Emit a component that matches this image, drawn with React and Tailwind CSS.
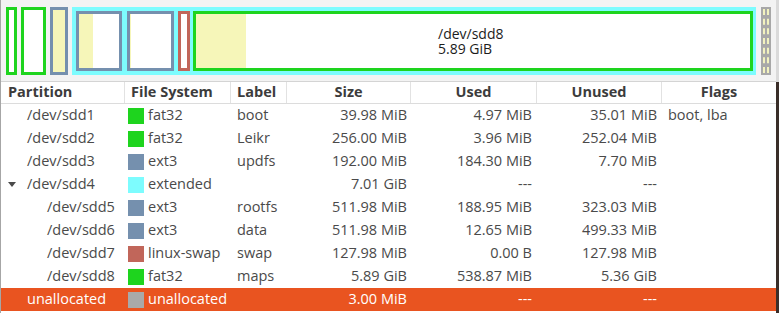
import React from "react";

const FS = {
  fat32: "#1ed41e",
  ext3: "#7590ae",
  "linux-swap": "#c1665a",
  extended: "#7dfcfe",
  unallocated: "#a9a9a9",
};

const ROWS = [
  { part: "/dev/sdd1", depth: 0, fs: "fat32", label: "boot", size: "39.98 MiB", used: "4.97 MiB", unused: "35.01 MiB", flags: "boot, lba" },
  { part: "/dev/sdd2", depth: 0, fs: "fat32", label: "Leikr", size: "256.00 MiB", used: "3.96 MiB", unused: "252.04 MiB" },
  { part: "/dev/sdd3", depth: 0, fs: "ext3", label: "updfs", size: "192.00 MiB", used: "184.30 MiB", unused: "7.70 MiB" },
  { part: "/dev/sdd4", depth: 0, fs: "extended", label: "", size: "7.01 GiB", used: "---", unused: "---", open: true },
  { part: "/dev/sdd5", depth: 1, fs: "ext3", label: "rootfs", size: "511.98 MiB", used: "188.95 MiB", unused: "323.03 MiB" },
  { part: "/dev/sdd6", depth: 1, fs: "ext3", label: "data", size: "511.98 MiB", used: "12.65 MiB", unused: "499.33 MiB" },
  { part: "/dev/sdd7", depth: 1, fs: "linux-swap", label: "swap", size: "127.98 MiB", used: "0.00 B", unused: "127.98 MiB" },
  { part: "/dev/sdd8", depth: 1, fs: "fat32", label: "maps", size: "5.89 GiB", used: "538.87 MiB", unused: "5.36 GiB" },
  { part: "unallocated", depth: 0, fs: "unallocated", label: "", size: "3.00 MiB", used: "---", unused: "---", selected: true },
];

function PartBox({ color, width, fill = 0, children }) {
  return (
    <div
      className="relative h-full border-[3px] bg-white flex shrink-0"
      style={{ width, borderColor: color }}
    >
      {fill > 0 && <div className="h-full bg-[#f6f6b9]" style={{ width: fill }} />}
      {children}
    </div>
  );
}

function Bar() {
  return (
    <div className="h-[82px] flex gap-[4px] pl-[5px] pt-[7px] pb-[6px] border-b border-[#d4d4d4] bg-[#f3f3f3]">
      <PartBox color={FS.fat32} width={11} />
      <PartBox color={FS.fat32} width={25} />
      <PartBox color={FS.ext3} width={18} fill={12} />
      <div className="w-[684px] h-full bg-[#7dfcfe] flex pl-[4px] pr-[3px] py-[4px] shrink-0">
        <PartBox color={FS.ext3} width={46} fill={14} />
        <div className="w-[5px]" />
        <PartBox color={FS.ext3} width={47} fill={1} />
        <div className="w-[4px]" />
        <PartBox color={FS["linux-swap"]} width={12} />
        <div className="w-[3px]" />
        <PartBox color={FS.fat32} width={560} fill={50}>
          <div className="absolute left-[242px] top-[12px] text-[14px] leading-[15px] text-[#1c1c1c]">
            <div>/dev/sdd8</div>
            <div>5.89 GiB</div>
          </div>
        </PartBox>
      </div>
      <div className="ml-[1px] w-[10px] h-full bg-[#a8a8a8] px-[2px] py-[2px] shrink-0">
        <div className="h-full border-x-2 border-dashed border-[#f2f2bf]" />
      </div>
    </div>
  );
}

const COLS = "grid grid-cols-[124px_106px_56px_124px_126px_125px_1fr]";

function Header() {
  const cell = "h-full flex items-center border-r border-[#e2e2e2]";
  return (
    <div className={`${COLS} h-[22px] bg-white border-b border-[#dcdcdc] font-bold text-[14.5px] text-[#3c3c3c]`}>
      <div className={`${cell} pl-[7px]`}>Partition</div>
      <div className={`${cell} pl-[6px]`}>File System</div>
      <div className={`${cell} pl-[6px]`}>Label</div>
      <div className={`${cell} justify-center`}>Size</div>
      <div className={`${cell} justify-center`}>Used</div>
      <div className={`${cell} justify-center`}>Unused</div>
      <div className="h-full flex items-center justify-center">Flags</div>
    </div>
  );
}

function Row({ r }) {
  const sel = r.selected;
  return (
    <div
      className={`${COLS} h-[23px] items-center text-[14.5px] whitespace-nowrap ${
        sel ? "bg-[#e95420] text-white" : "bg-white text-[#4a4a4a]"
      }`}
    >
      <div className={`flex items-center ${r.depth ? "pl-[46px]" : r.open ? "pl-[7px]" : "pl-[26px]"}`}>
        {r.open && (
          <svg width="8" height="6" viewBox="0 0 8 6" className="mr-[11px]">
            <path d="M0 0 L8 0 L4 5 Z" fill="#4a4a4a" />
          </svg>
        )}
        <span>{r.part}</span>
      </div>
      <div className="flex items-center pl-[3px] gap-[4px]">
        <span className="w-[16px] h-[16px] shrink-0" style={{ background: FS[r.fs] }} />
        <span>{r.fs}</span>
      </div>
      <div className="pl-[6px]">{r.label}</div>
      <div className="text-right pr-[4px]">{r.size}</div>
      <div className="text-right pr-[5px]">{r.used}</div>
      <div className="text-right pr-[5px]">{r.unused}</div>
      <div className="pl-[6px]">{r.flags || ""}</div>
    </div>
  );
}

export default function App() {
  return (
    <div className="w-[779px] h-[313px] flex overflow-hidden font-['Open_Sans',sans-serif] leading-none">
      <div className="w-[776px] h-full flex flex-col border-l border-[#a6a6a6] bg-white">
        <Bar />
        <Header />
        {ROWS.map((r) => (
          <Row key={r.part} r={r} />
        ))}
      </div>
      <div className="w-[3px] h-full flex flex-col">
        <div className="h-[82px] bg-[#dadada]" />
        <div className="flex-1 bg-[#3a2e29]" />
      </div>
    </div>
  );
}
